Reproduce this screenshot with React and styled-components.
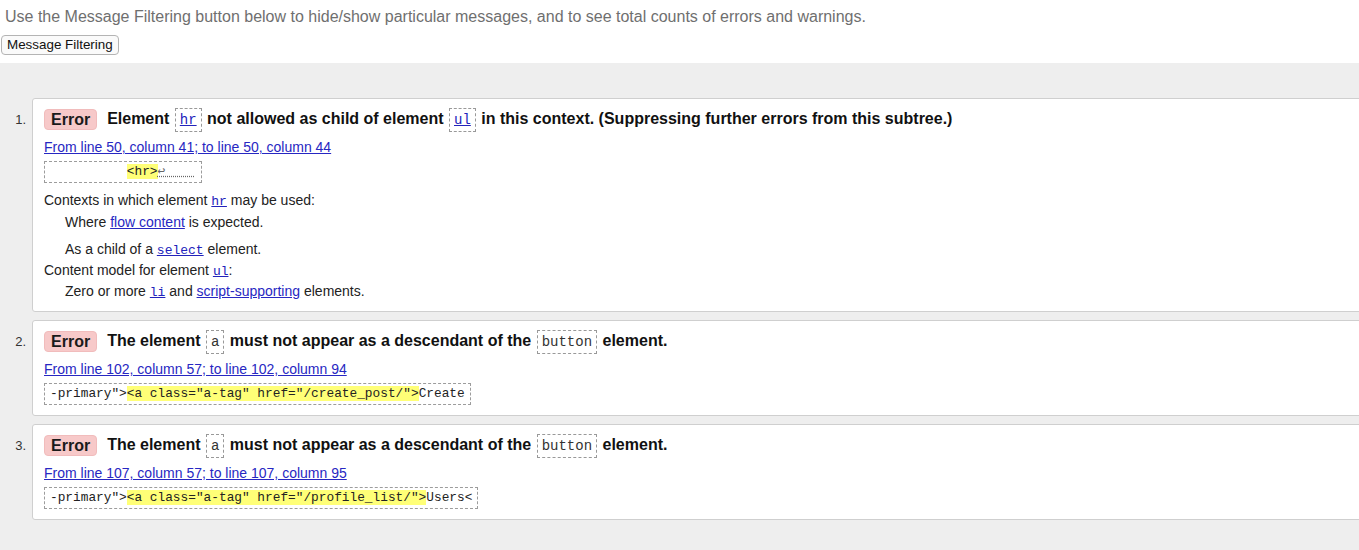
import React from 'react';
import styled, { createGlobalStyle } from 'styled-components';

const GlobalStyle = createGlobalStyle`
  html, body {
    margin: 0;
    padding: 0;
    background: #fff;
    overflow: hidden;
  }
  body {
    font-family: "Liberation Sans", Arial, sans-serif;
    color: #111;
  }
`;

const messages = [
  {
    id: 1,
    parts: [
      { t: 'Element ' },
      { code: 'hr', link: true },
      { t: ' not allowed as child of element ' },
      { code: 'ul', link: true },
      { t: ' in this context. (Suppressing further errors from this subtree.)' },
    ],
    location: 'From line 50, column 41; to line 50, column 44',
    extract: { before: '          ', mark: '<hr>', after: '', lf: true },
    details: true,
  },
  {
    id: 2,
    parts: [
      { t: 'The element ' },
      { code: 'a' },
      { t: ' must not appear as a descendant of the ' },
      { code: 'button' },
      { t: ' element.' },
    ],
    location: 'From line 102, column 57; to line 102, column 94',
    extract: { before: '-primary">', mark: '<a class="a-tag" href="/create_post/">', after: 'Create' },
  },
  {
    id: 3,
    parts: [
      { t: 'The element ' },
      { code: 'a' },
      { t: ' must not appear as a descendant of the ' },
      { code: 'button' },
      { t: ' element.' },
    ],
    location: 'From line 107, column 57; to line 107, column 95',
    extract: { before: '-primary">', mark: '<a class="a-tag" href="/profile_list/">', after: 'Users<' },
  },
];

const App = () => (
  <>
    <GlobalStyle />
    <Intro>
      <IntroText>
        Use the Message Filtering button below to hide/show particular messages, and to see total counts of errors and warnings.
      </IntroText>
      <FilterButton>Message Filtering</FilterButton>
    </Intro>
    <Results>
      <MessageList>
        {messages.map((m) => (
          <Item key={m.id}>
            <Num>{m.id}.</Num>
            <Card>
              <Heading>
                <Badge>Error</Badge>
                <HeadingText>
                  {m.parts.map((p, i) =>
                    p.code ? (
                      <InlineCode key={i}>
                        {p.link ? <CodeLink href="#">{p.code}</CodeLink> : p.code}
                      </InlineCode>
                    ) : (
                      <span key={i}>{p.t}</span>
                    )
                  )}
                </HeadingText>
              </Heading>
              <Location href="#">{m.location}</Location>
              <Extract>
                {m.extract.before}
                <Mark>{m.extract.mark}</Mark>
                {m.extract.after}
                {m.extract.lf && <Lf>{'↩    '}</Lf>}
              </Extract>
              {m.details && (
                <Details>
                  <DetailLine $top={7}>
                    Contexts in which element <MonoLink href="#">hr</MonoLink> may be used:
                  </DetailLine>
                  <DetailLine $top={2} $indent>
                    Where <TextLink href="#">flow content</TextLink> is expected.
                  </DetailLine>
                  <DetailLine $top={7} $indent>
                    As a child of a <MonoLink href="#">select</MonoLink> element.
                  </DetailLine>
                  <DetailLine $top={1}>
                    Content model for element <MonoLink href="#">ul</MonoLink>:
                  </DetailLine>
                  <DetailLine $top={1} $indent>
                    Zero or more <MonoLink href="#">li</MonoLink> and{' '}
                    <TextLink href="#">script-supporting</TextLink> elements.
                  </DetailLine>
                </Details>
              )}
            </Card>
          </Item>
        ))}
      </MessageList>
    </Results>
  </>
);

export default App;

const Intro = styled.div`
  padding: 8px 0 8px 1px;
  height: 47px;
  display: flex;
  flex-direction: column;
  align-items: flex-start;
`;

const IntroText = styled.p`
  margin: 0 0 9px 4px;
  font-size: 16px;
  line-height: 18px;
  color: #6f6f6f;
`;

const FilterButton = styled.button`
  font-family: "Liberation Sans", Arial, sans-serif;
  font-size: 13.4px;
  color: #111;
  background: #fafafa;
  border: 1px solid #b4b4b4;
  border-radius: 4px;
  height: 20px;
  padding: 0 5px;
  line-height: 16px;
`;

const Results = styled.div`
  background: #eeeeee;
  padding: 35px 0 40px 0;
  min-height: 460px;
`;

const MessageList = styled.div`
  display: flex;
  flex-direction: column;
  gap: 8px;
  margin-right: -20px;
`;

const Item = styled.div`
  display: flex;
  align-items: flex-start;
`;

const Num = styled.div`
  width: 26px;
  padding-right: 6px;
  text-align: right;
  font-size: 13px;
  color: #333;
  padding-top: 14px;
`;

const Card = styled.div`
  flex: 1;
  background: #fff;
  border: 1px solid #cfcfcf;
  border-radius: 3px;
  padding: 10px 11px 10px 11px;
`;

const Heading = styled.div`
  display: flex;
  align-items: center;
  height: 20px;
`;

const Badge = styled.span`
  display: inline-block;
  background: #f7c9c9;
  border: 1px solid #f1bcbc;
  border-radius: 4px;
  padding: 0 6px;
  height: 19px;
  line-height: 19px;
  font-weight: bold;
  font-size: 16px;
  color: #1a1a1a;
  margin-right: 10px;
`;

const HeadingText = styled.span`
  font-size: 16px;
  line-height: 20px;
  font-weight: bold;
  color: #111;
  white-space: nowrap;
  padding-top: 1px;
`;

const InlineCode = styled.code`
  display: inline-block;
  font-family: "Liberation Mono", "DejaVu Sans Mono", monospace;
  font-weight: normal;
  font-size: 14px;
  line-height: 20px;
  border: 1px dashed #999;
  padding: 1px 4px;
  margin: 0 1px;
  vertical-align: middle;
  color: #333;
`;

const CodeLink = styled.a`
  color: #2222bb;
  text-decoration: underline;
`;

const Location = styled.a`
  display: block;
  width: fit-content;
  margin-top: 10px;
  font-size: 14px;
  line-height: 16px;
  color: #2727c2;
  text-decoration: underline;
`;

const Extract = styled.code`
  display: block;
  width: fit-content;
  margin-top: 6px;
  border: 1px dashed #9c9c9c;
  padding: 1px 5px;
  font-family: "Liberation Mono", "DejaVu Sans Mono", monospace;
  font-size: 12.8px;
  line-height: 18px;
  white-space: pre;
  color: #222;
`;

const Mark = styled.mark`
  background: #ffff77;
  color: #222;
`;

const Lf = styled.span`
  color: #666;
  text-decoration: underline dotted;
`;

const Details = styled.div`
  font-size: 14px;
  color: #222;
`;

const DetailLine = styled.p`
  margin: ${({ $top }) => $top}px 0 0 ${({ $indent }) => ($indent ? '21px' : '0')};
  height: 20px;
  line-height: 20px;
  overflow: visible;
`;

const MonoLink = styled.a`
  font-family: "Liberation Mono", "DejaVu Sans Mono", monospace;
  font-size: 13px;
  line-height: 1;
  color: #2222bb;
`;

const TextLink = styled.a`
  color: #2727c2;
`;
